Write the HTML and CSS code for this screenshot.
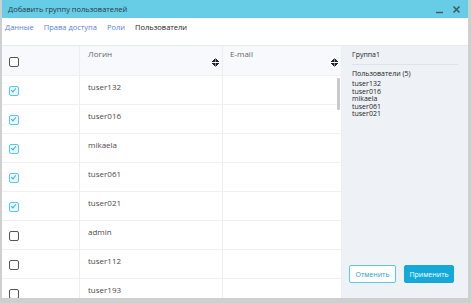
FILE: index.html
```html
<!DOCTYPE html>
<html lang="ru">
<head>
<meta charset="utf-8">
<title>Добавить группу пользователей</title>
<link rel="stylesheet" href="styles.css">
</head>
<body>
<div class="dialog">
	<div class="titlebar">
		<span class="title">Добавить группу пользователей</span>
		<span class="tb-btns">
			<svg width="9" height="9" viewBox="0 0 9 9"><path d="M1 7.5h7" stroke="#3d5a66" stroke-width="1.4"/></svg>
			<svg width="9" height="9" viewBox="0 0 9 9"><path d="M1.5 1.5l6 6M7.5 1.5l-6 6" stroke="#3d5a66" stroke-width="1.6"/></svg>
		</span>
	</div>
	<div class="tabs">
		<a>Данные</a>
		<a>Права доступа</a>
		<a>Роли</a>
		<a class="active">Пользователи</a>
	</div>
	<div class="content">
		<div class="grid">
			<div class="row head">
				<div class="c-check"><span class="cb"></span></div>
				<div class="c-login">Логин<span class="sort"></span></div>
				<div class="c-mail">E-mail<span class="sort"></span></div>
			</div>
			<div class="row"><div class="c-check"><span class="cb on"></span></div><div class="c-login">tuser132</div><div class="c-mail"></div></div>
			<div class="row"><div class="c-check"><span class="cb on"></span></div><div class="c-login">tuser016</div><div class="c-mail"></div></div>
			<div class="row"><div class="c-check"><span class="cb on"></span></div><div class="c-login">mikaela</div><div class="c-mail"></div></div>
			<div class="row"><div class="c-check"><span class="cb on"></span></div><div class="c-login">tuser061</div><div class="c-mail"></div></div>
			<div class="row"><div class="c-check"><span class="cb on"></span></div><div class="c-login">tuser021</div><div class="c-mail"></div></div>
			<div class="row"><div class="c-check"><span class="cb"></span></div><div class="c-login">admin</div><div class="c-mail"></div></div>
			<div class="row"><div class="c-check"><span class="cb"></span></div><div class="c-login">tuser112</div><div class="c-mail"></div></div>
			<div class="row"><div class="c-check"><span class="cb"></span></div><div class="c-login">tuser193</div><div class="c-mail"></div></div>
			<div class="scroll"></div>
		</div>
		<div class="side">
			<div class="group">Группа1</div>
			<div class="users-title">Пользователи (5)</div>
			<div class="users">tuser132<br>tuser016<br>mikaela<br>tuser061<br>tuser021</div>
			<div class="buttons">
				<button class="btn outline">Отменить</button>
				<button class="btn fill">Применить</button>
			</div>
		</div>
	</div>
</div>
</body>
</html>
```

FILE: styles.css
```css
html, body {
	margin: 0;
	height: 100%;
	overflow: hidden;
}

body {
	background: #cfcfcf;
	font-family: "Open Sans", "Noto Sans", sans-serif;
	color: #444;
}

.dialog {
	width: 466px;
	height: 298px;
	margin-left: 2px;
	background: #fff;
	display: flex;
	flex-direction: column;
	overflow: hidden;
}

.titlebar {
	height: 18px;
	flex: none;
	background: #67cde6;
	display: flex;
	align-items: center;
	justify-content: space-between;
	padding: 0 7px 0 6px;
	font-size: 7.5px;
	color: #26383f;
}

.tb-btns {
	display: flex;
	gap: 8px;
	align-items: center;
}

.tabs {
	height: 28px;
	flex: none;
	display: flex;
	gap: 10px;
	padding: 4px 0 0 3px;
	box-sizing: border-box;
	font-size: 7.5px;
	border-bottom: 1px solid #e6ebf0;
}

.tabs a {
	color: #5b7fd6;
}

.tabs a.active {
	color: #222;
}

.content {
	flex: 1;
	display: flex;
	min-height: 0;
}

.grid {
	width: 340px;
	flex: none;
	position: relative;
	overflow: hidden;
}

.row {
	display: flex;
	height: 28px;
	border-bottom: 1px solid #eef0f2;
	font-size: 8px;
	color: #4a4a4a;
}

.row.head {
	height: 29px;
	background: #f7f9fc;
	color: #666;
}

.row > div {
	box-sizing: border-box;
	border-right: 1px solid #eceff2;
}

.c-check {
	width: 78px;
	display: flex;
	align-items: center;
	padding: 2px 0 0 7px;
}

.c-login {
	width: 143px;
	padding: 5px 0 0 8px;
	position: relative;
}

.c-mail {
	flex: 1;
	padding: 5px 0 0 7px;
	position: relative;
}

.row.head .c-login,
.row.head .c-mail {
	padding-top: 2px;
}

.sort {
	position: absolute;
	right: 3px;
	top: 12px;
	width: 7px;
	height: 9px;
	background:
		linear-gradient(to bottom right, transparent 50%, #222 50%) left top / 3.5px 4px no-repeat,
		linear-gradient(to bottom left, transparent 50%, #222 50%) right top / 3.5px 4px no-repeat,
		linear-gradient(to top right, transparent 50%, #222 50%) left bottom / 3.5px 4px no-repeat,
		linear-gradient(to top left, transparent 50%, #222 50%) right bottom / 3.5px 4px no-repeat;
}

.cb {
	width: 8px;
	height: 8px;
	border: 1.5px solid #555;
	border-radius: 2px;
	background: #fff;
	position: relative;
}

.cb.on {
	border-color: #5bc8ea;
	background: #eaf8fd;
}

.cb.on::after {
	content: "";
	position: absolute;
	left: 2px;
	top: 0px;
	width: 2px;
	height: 4px;
	border: solid #3ab3dc;
	border-width: 0 1.3px 1.3px 0;
	transform: rotate(40deg);
}

.scroll {
	position: absolute;
	right: 2px;
	top: 32px;
	width: 3px;
	height: 32px;
	background: #c9c9c9;
	border-radius: 1px;
}

.side {
	flex: 1;
	min-width: 0;
	background: #eef2f6;
	display: flex;
	flex-direction: column;
	padding: 4px 10px 15px 10px;
	font-size: 7px;
	color: #222;
}

.group {
	padding-bottom: 5px;
	border-bottom: 1px solid #dde3ea;
}

.users-title {
	margin-top: 4px;
}

.users {
	margin-top: 2px;
	line-height: 7.5px;
}

.buttons {
	margin-top: auto;
	display: flex;
	gap: 8px;
	margin-left: -3px;
}

.btn {
	font-family: inherit;
	font-size: 7px;
	height: 18px;
	border-radius: 2px;
	padding: 0;
	cursor: pointer;
}

.btn.outline {
	width: 47px;
	background: #fff;
	border: 1px solid #5ac8e8;
	color: #2a9ec9;
}

.btn.fill {
	width: 50px;
	background: #15a9d9;
	border: 1px solid #15a9d9;
	color: #fff;
}
```
